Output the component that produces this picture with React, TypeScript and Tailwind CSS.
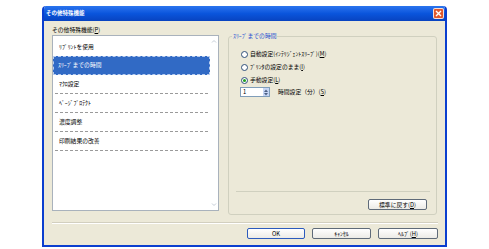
import React from "react";

const items = [
  "ﾘﾌﾟﾘﾝﾄを使用",
  "ｽﾘｰﾌﾟまでの時間",
  "ﾏｸﾛ設定",
  "ﾍﾟｰｼﾞﾌﾟﾛﾃｸﾄ",
  "濃度調整",
  "印刷結果の改善",
];

function Radio({ checked = false }: { checked?: boolean }) {
  return (
    <span className="w-[7px] h-[7px] rounded-full border border-[#2f4f7a] bg-white flex items-center justify-center shrink-0">
      {checked && <span className="w-[3px] h-[3px] rounded-full bg-[#21a121]" />}
    </span>
  );
}

function XpButton({ label, primary = false, className = "" }: { label: React.ReactNode; primary?: boolean; className?: string }) {
  return (
    <button
      className={
        "h-[11px] rounded-[2px] border bg-gradient-to-b from-white to-[#ecebe6] text-black flex items-center justify-center leading-none " +
        (primary ? "border-[#2c5bbd] " : "border-[#5f6b79] ") +
        className
      }
    >
      {label}
    </button>
  );
}

export default function App() {
  return (
    <div
      className="w-[489px] h-[249px] bg-white overflow-hidden pt-[6px] pl-[42px] text-[5.8px] text-black"
      style={{ fontFamily: '"Noto Sans CJK JP", "Liberation Sans", sans-serif' }}
    >
      <div className="w-[405px] h-[241px] flex flex-col border-x-2 border-b-2 border-[#0b3fcf] rounded-t-[4px] overflow-hidden">
        {/* Title bar */}
        <div className="h-[15px] shrink-0 flex items-center justify-between pl-[2px] pr-[1px] bg-gradient-to-b from-[#2a74ee] via-[#0a55dc] to-[#0843c0]">
          <span className="text-white font-bold leading-none text-[5.5px]">その他特殊機能</span>
          <span className="w-[11px] h-[11px] rounded-[2px] border border-white/80 bg-[#e0582e] flex items-center justify-center">
            <svg width="7" height="7" viewBox="0 0 7 7">
              <path d="M1 1L6 6M6 1L1 6" stroke="white" strokeWidth="1.4" />
            </svg>
          </span>
        </div>

        {/* Body */}
        <div className="flex-1 bg-[#ece9d8] pl-[8px] pr-[7px] pt-[3px] flex flex-col">
          <div className="h-[11px] leading-[11px]">
            その他特殊機能(<span className="underline">P</span>)
          </div>

          <div className="flex gap-[9px]">
            {/* List box */}
            <div className="w-[167px] h-[176px] bg-white border border-[#a9b2bc] flex">
              <div className="flex-1 pt-[2px]">
                {items.map((it, i) => (
                  <div
                    key={it}
                    className={
                      "h-[19px] flex items-center pl-[4px] border-dashed " +
                      (i === 1
                        ? "bg-[#316ac5] text-white border border-[#b8cdef] -mt-px"
                        : "border-b border-[#9a9a9a] mx-[2px]")
                    }
                  >
                    {it}
                  </div>
                ))}
              </div>
              <div className="w-[8px] flex flex-col justify-between items-center py-[3px] text-[#c4ccd6]">
                <svg width="6" height="5" viewBox="0 0 6 5">
                  <path d="M1 3.5L3 1.5L5 3.5" stroke="currentColor" fill="none" />
                </svg>
                <svg width="6" height="5" viewBox="0 0 6 5">
                  <path d="M1 1.5L3 3.5L5 1.5" stroke="currentColor" fill="none" />
                </svg>
              </div>
            </div>

            {/* Group box */}
            <div className="w-[209px] h-[179px] mt-[1px] border border-[#d0d0bf] rounded-[3px] relative flex flex-col pl-[12px] pr-[6px]">
              <span className="absolute -top-[4px] left-[3px] px-[1px] bg-[#ece9d8] text-[#1d4fd1] leading-none">
                ｽﾘｰﾌﾟまでの時間
              </span>
              <div className="mt-[14px] flex flex-col gap-[6px]">
                <div className="flex items-center gap-[2px] h-[7px]">
                  <Radio />
                  <span>
                    自動設定(ｲﾝﾃﾘｼﾞｪﾝﾄｽﾘｰﾌﾟ)(<span className="underline">M</span>)
                  </span>
                </div>
                <div className="flex items-center gap-[2px] h-[7px]">
                  <Radio />
                  <span>
                    ﾌﾟﾘﾝﾀの設定のまま(<span className="underline">I</span>)
                  </span>
                </div>
                <div className="flex items-center gap-[2px] h-[7px]">
                  <Radio checked />
                  <span>
                    手動設定(<span className="underline">L</span>)
                  </span>
                </div>
              </div>
              <div className="flex items-center mt-[3px] -ml-[1px]">
                <div className="w-[30px] h-[10px] border border-[#7f9db9] bg-white flex">
                  <span className="flex-1 pl-[2px] leading-[8px]">1</span>
                  <div className="w-[6px] flex flex-col">
                    <span className="flex-1 bg-[#c6d6f5] flex items-center justify-center">
                      <svg width="4" height="3" viewBox="0 0 4 3">
                        <path d="M0 3L2 0.5L4 3Z" fill="#4d6185" />
                      </svg>
                    </span>
                    <span className="flex-1 bg-[#c6d6f5] flex items-center justify-center">
                      <svg width="4" height="3" viewBox="0 0 4 3">
                        <path d="M0 0L2 2.5L4 0Z" fill="#4d6185" />
                      </svg>
                    </span>
                  </div>
                </div>
                <span className="ml-[8px]">
                  時間設定（分）(<span className="underline">S</span>)
                </span>
              </div>

              <div className="flex-1" />
              <div className="h-px bg-[#d0d0bf] -ml-[5px]" />
              <div className="flex justify-end mt-[7px] mb-[4px] pr-[3px]">
                <XpButton className="w-[59px]" label={<>標準に戻す(<span className="underline">D</span>)</>} />
              </div>
            </div>
          </div>

          {/* Separator */}
          <div className="mt-[7px] h-px bg-[#d2cfbf] border-b border-white box-content" />

          {/* Buttons */}
          <div className="flex justify-end gap-[7px] mt-[4px]">
            <XpButton primary className="w-[58px]" label="OK" />
            <XpButton className="w-[59px]" label="ｷｬﾝｾﾙ" />
            <XpButton className="w-[60px]" label={<>ﾍﾙﾌﾟ(<span className="underline">H</span>)</>} />
          </div>
        </div>
      </div>
    </div>
  );
}
